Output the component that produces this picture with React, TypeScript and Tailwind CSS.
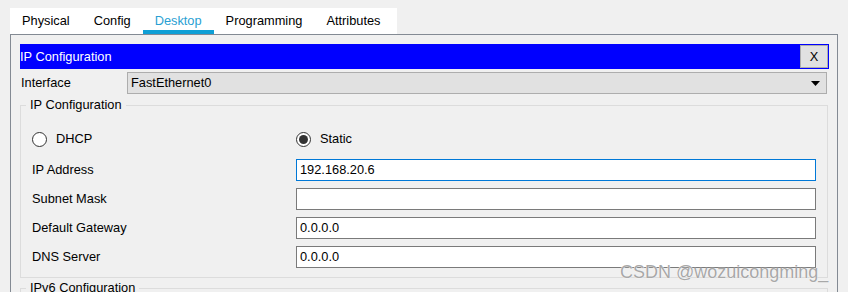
import React from 'react';

const TABS = ['Physical', 'Config', 'Desktop', 'Programming', 'Attributes'];

const ROWS = [
  { label: 'IP Address', value: '192.168.20.6', focused: true },
  { label: 'Subnet Mask', value: '', focused: false },
  { label: 'Default Gateway', value: '0.0.0.0', focused: false },
  { label: 'DNS Server', value: '0.0.0.0', focused: false },
];

const Radio: React.FC<{ checked: boolean; label: string }> = ({ checked, label }) => (
  <div className="flex items-center gap-[9px]">
    <span className="flex h-[15px] w-[15px] items-center justify-center rounded-full border border-[#333] bg-white">
      {checked && <span className="h-[9px] w-[9px] rounded-full bg-[#333]" />}
    </span>
    <span>{label}</span>
  </div>
);

const App: React.FC = () => {
  return (
    <div
      className="relative h-[292px] overflow-hidden bg-[#f0f0f0] text-[12.8px] leading-[14px] text-black"
      style={{ fontFamily: '"Liberation Sans", Arial, sans-serif' }}
    >
      {/* tab strip */}
      <div className="ml-[10px] mt-[8px] flex h-[26px] w-[387px] bg-white">
        {TABS.map(tab => (
          <div
            key={tab}
            className={
              tab === 'Desktop'
                ? 'flex items-center border-b-4 border-[#0e9fd6] px-[12px] pt-[4px] text-[#2a9fd3]'
                : 'flex items-center px-[12px]'
            }
          >
            {tab}
          </div>
        ))}
      </div>

      {/* desktop panel */}
      <div className="ml-[10px] w-[828px] border border-[#838a93] pb-[20px] pl-[9px] pr-[8px] pt-[9px]">
        <div className="flex h-[25px] items-center justify-between bg-[#0000ff] pr-[1px] text-white">
          <span>IP Configuration</span>
          <button className="flex h-[23px] w-[28px] items-center justify-center border border-[#adadad] bg-[#e1e1e1] text-black">
            X
          </button>
        </div>

        <div className="mt-[3px] flex h-[22px] items-center">
          <span className="w-[107px] pl-[1px]">Interface</span>
          <div className="flex h-[22px] w-[700px] items-center justify-between border border-[#adadad] bg-[#e1e1e1] pl-[3px] pr-[6px]">
            <span>FastEthernet0</span>
            <svg width="9" height="5" viewBox="0 0 9 5">
              <path d="M0 0h9L4.5 5z" fill="#000" />
            </svg>
          </div>
        </div>

        <fieldset className="mt-[4px] w-[808px] border border-[#dcdcdc] pb-[9px] pl-[11px] pr-[11px]">
          <legend className="ml-[-6px] px-[4px] leading-[14px]">IP Configuration</legend>
          <div className="mt-[16px] flex h-[22px] items-center">
            <div className="w-[264px]">
              <Radio checked={false} label="DHCP" />
            </div>
            <Radio checked={true} label="Static" />
          </div>
          <div className="mt-[9px] flex flex-col gap-[7px]">
            {ROWS.map(row => (
              <div key={row.label} className="flex h-[22px] items-center">
                <span className="w-[264px]">{row.label}</span>
                <div
                  className={
                    row.focused
                      ? 'flex h-[22px] w-[520px] items-center border border-[#0078d7] bg-white pl-[3px]'
                      : 'flex h-[22px] w-[520px] items-center border border-[#7a7a7a] bg-white pl-[3px]'
                  }
                >
                  {row.value}
                </div>
              </div>
            ))}
          </div>
        </fieldset>

        <fieldset className="mt-[3px] h-[60px] w-[808px] border border-[#dcdcdc]">
          <legend className="ml-[5px] px-[4px] leading-[14px]">IPv6 Configuration</legend>
        </fieldset>
      </div>

      {/* watermark */}
      <div
        className="absolute left-[620px] top-[262px] text-[18px] leading-[20px] text-[#a8a8a8]"
        style={{ textShadow: '0 0 1px #fff, 0 0 1px #fff' }}
      >
        CSDN @wozuicongming_
      </div>
    </div>
  );
};

export default App;
